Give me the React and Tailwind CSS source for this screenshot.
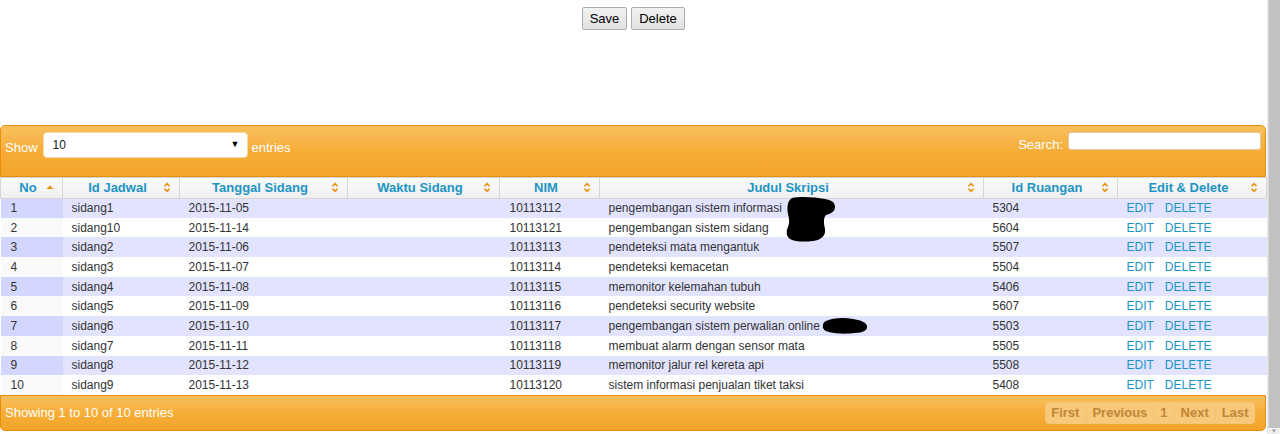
import React from 'react';

const columns = [
  { label: 'No', width: 62, sort: 'asc' },
  { label: 'Id Jadwal', width: 117 },
  { label: 'Tanggal Sidang', width: 168 },
  { label: 'Waktu Sidang', width: 152 },
  { label: 'NIM', width: 100 },
  { label: 'Judul Skripsi', width: 384 },
  { label: 'Id Ruangan', width: 134 },
  { label: 'Edit & Delete', width: 149 },
];

const rows = [
  ['1', 'sidang1', '2015-11-05', '10113112', 'pengembangan sistem informasi', '5304'],
  ['2', 'sidang10', '2015-11-14', '10113121', 'pengembangan sistem sidang', '5604'],
  ['3', 'sidang2', '2015-11-06', '10113113', 'pendeteksi mata mengantuk', '5507'],
  ['4', 'sidang3', '2015-11-07', '10113114', 'pendeteksi kemacetan', '5504'],
  ['5', 'sidang4', '2015-11-08', '10113115', 'memonitor kelemahan tubuh', '5406'],
  ['6', 'sidang5', '2015-11-09', '10113116', 'pendeteksi security website', '5607'],
  ['7', 'sidang6', '2015-11-10', '10113117', 'pengembangan sistem perwalian online', '5503'],
  ['8', 'sidang7', '2015-11-11', '10113118', 'membuat alarm dengan sensor mata', '5505'],
  ['9', 'sidang8', '2015-11-12', '10113119', 'memonitor jalur rel kereta api', '5508'],
  ['10', 'sidang9', '2015-11-13', '10113120', 'sistem informasi penjualan tiket taksi', '5408'],
];

const SortBoth = () => (
  <svg width="8" height="11" viewBox="0 0 8 11" className="shrink-0">
    <path d="M1.5 4.2 L4 1.7 L6.5 4.2" fill="none" stroke="#e78f08" strokeWidth="1.6" />
    <path d="M1.5 6.8 L4 9.3 L6.5 6.8" fill="none" stroke="#e78f08" strokeWidth="1.6" />
  </svg>
);

const SortAsc = () => (
  <svg width="8" height="11" viewBox="0 0 8 11" className="shrink-0">
    <path d="M0.5 7 L4 3.5 L7.5 7 Z" fill="#e78f08" />
  </svg>
);

// black marker scribbles over part of the titles
const Blob1 = () => (
  <svg width="52" height="47" viewBox="0 0 52 47" className="pointer-events-none absolute left-[176px] top-[-3px]">
    <path
      d="M7 2 C16 0 30 1 40 3 C46 4 50 6 50 11 C50 16 45 18 41 19 C38 22 39 28 40 33 C41 40 36 44 28 45 C20 46 10 46 5 43 C1 40 1 35 3 31 C5 26 4 22 3 18 C2 12 2 5 7 2 Z"
      fill="#000"
    />
  </svg>
);

const Blob2 = () => (
  <svg width="46" height="18" viewBox="0 0 46 18" className="pointer-events-none absolute left-[213px] top-[0px]">
    <path
      d="M4 4 C10 1 22 0 31 2 C38 3 44 5 45 9 C46 13 41 16 33 16 C25 17 14 17 7 15 C2 14 0 11 1 8 C1 6 2 5 4 4 Z"
      fill="#000"
    />
  </svg>
);

const App = () => {
  return (
    <div className="flex h-[434px] w-[1280px] overflow-hidden bg-white font-['Liberation_Sans',Arial,sans-serif] text-[#333]">
      <div className="w-[1267px] shrink-0">
        <div className="flex justify-center gap-[4px] pt-[7px]">
          <button className="h-[23px] w-[45px] rounded-[2px] border border-[#adadad] bg-gradient-to-b from-[#f2f2f2] to-[#e2e2e2] text-[13px] text-black">
            Save
          </button>
          <button className="h-[23px] w-[54px] rounded-[2px] border border-[#adadad] bg-gradient-to-b from-[#f2f2f2] to-[#e2e2e2] text-[13px] text-black">
            Delete
          </button>
        </div>

        <div className="mt-[95px] w-[1266px]">
          <div className="flex h-[52px] items-start justify-between rounded-t-[5px] border border-[#e78f08] bg-gradient-to-b from-[#f8bf5e] via-[#f6ad37] to-[#f4a52a] pl-[4px] pr-[4px] pt-[5px] text-[13px] text-white">
            <div className="flex items-center pt-[1px]">
              <span className="mt-[6px]">Show</span>
              <div className="ml-[5px] flex h-[26px] w-[205px] items-center justify-between rounded-[4px] border border-[#f5d9a8] bg-white pl-[9px] pr-[7px] text-[12px] text-[#222]">
                <span>10</span>
                <span className="text-[9px] text-black">▼</span>
              </div>
              <span className="ml-[4px] mt-[6px]">entries</span>
            </div>
            <div className="flex items-start pt-[1px]">
              <span className="mt-[3px]">Search:</span>
              <div className="ml-[5px] h-[18px] w-[193px] rounded-[3px] border border-[#e0c9a0] bg-white" />
            </div>
          </div>

          <table className="w-[1266px] table-fixed border-collapse text-[12px]">
            <colgroup>
              {columns.map((c) => (
                <col key={c.label} style={{ width: c.width }} />
              ))}
            </colgroup>
            <thead>
              <tr className="h-[20px] bg-gradient-to-b from-[#fbfbfb] to-[#efefef]">
                {columns.map((c) => (
                  <th
                    key={c.label}
                    className="border border-[#d6d6d6] p-0 text-[13px] font-bold text-[#1c94c4]"
                  >
                    <div className="flex items-center pl-[9px] pr-[8px]">
                      <span className="flex-1 text-center">{c.label}</span>
                      {c.sort === 'asc' ? <SortAsc /> : <SortBoth />}
                    </div>
                  </th>
                ))}
              </tr>
            </thead>
            <tbody>
              {rows.map((r, i) => {
                const odd = i % 2 === 0;
                const cell = 'p-0 pl-[9px] whitespace-nowrap';
                return (
                  <tr key={r[0]} className={`h-[19.7px] ${odd ? 'bg-[#e2e4ff]' : 'bg-white'}`}>
                    <td className={`${cell} ${odd ? 'bg-[#d3d6ff]' : 'bg-[#fafafa]'} pl-[10px]`}>{r[0]}</td>
                    <td className={cell}>{r[1]}</td>
                    <td className={`${cell} pl-[8px]`}>{r[2]}</td>
                    <td className={cell}></td>
                    <td className={`${cell} pl-[10px]`}>{r[3]}</td>
                    <td className={`${cell} pl-[8px]`}>
                      <div className="relative">
                        {r[4]}
                        {i === 0 && <Blob1 />}
                        {i === 6 && <Blob2 />}
                      </div>
                    </td>
                    <td className={cell}>{r[5]}</td>
                    <td className={`${cell} text-[#1c94c4]`}>
                      <span className="mr-[11px]">EDIT</span>
                      <span>DELETE</span>
                    </td>
                  </tr>
                );
              })}
            </tbody>
          </table>

          <div className="flex h-[36px] items-center justify-between rounded-b-[5px] border border-[#e78f08] bg-gradient-to-b from-[#f8bf5e] via-[#f6ad37] to-[#f4a52a] pl-[4px] pr-[10px] text-[13px] text-white">
            <span>Showing 1 to 10 of 10 entries</span>
            <div className="flex h-[22px] text-[13px] font-bold text-[#c08638]">
              {['First', 'Previous', '1', 'Next', 'Last'].map((p, i) => (
                <span
                  key={p}
                  className={`flex items-center border border-[#f7c57a] bg-[#f8c87b] px-[5.5px] ${i === 0 ? 'rounded-l-[4px]' : ''} ${i === 4 ? 'rounded-r-[4px]' : ''}`}
                >
                  {p}
                </span>
              ))}
            </div>
          </div>
        </div>
      </div>

      <div className="flex h-[434px] flex-1 flex-col border-l border-[#e6e6e6]">
        <div className="flex-1 border-l border-[#d8d8d8] bg-[#c1c1c1]" />
        <div className="flex h-[6px] items-start justify-center bg-[#f0f0f0] text-[6px] leading-none text-[#999]">▼</div>
      </div>
    </div>
  );
};

export default App;
